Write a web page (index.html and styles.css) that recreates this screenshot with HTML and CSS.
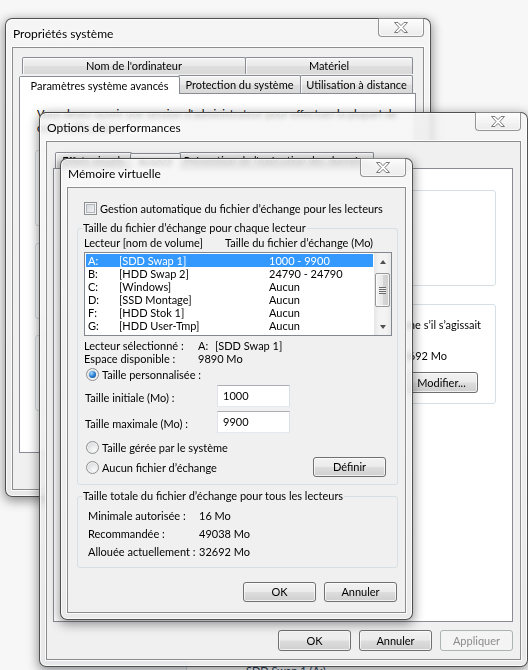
FILE: index.html
```html
<!DOCTYPE html>
<html lang="fr">
<head>
<meta charset="utf-8">
<title>Mémoire virtuelle</title>
<link rel="stylesheet" href="styles.css">
</head>
<body>

<div class="explorer">
  <div class="ex-side"></div>
  <div class="ex-main">SDD Swap 1 (A:)</div>
</div>

<section class="win win-sys">
  <div class="titlebar">
    <span class="title">Propriétés système</span>
    <span class="close"><svg width="14" height="11" viewBox="0 0 14 11"><path d="M0.5 0.5h3.5l3 3.2 3-3.2h3.5l-4.6 5 4.6 5h-3.5l-3-3.2-3 3.2h-3.5l4.6-5z" fill="#fff" stroke="#7a7a7a" stroke-width="1"/></svg></span>
  </div>
  <div class="client client-sys">
    <div class="tabrow row-back">
      <span class="tab t-nom">Nom de l'ordinateur</span>
      <span class="tab t-mat">Matériel</span>
    </div>
    <div class="tabrow row-front">
      <span class="tab sel t-avs">Paramètres système avancés</span>
      <span class="tab t-prot">Protection du système</span>
      <span class="tab t-dist">Utilisation à distance</span>
    </div>
    <div class="page page-sys">
      <p class="note">Vous devez ouvrir une session d'administrateur pour effectuer la plupart de ces modifications.</p>
      <div class="grp box sys-grp first"></div>
      <div class="grp box sys-grp second"></div>
      <div class="grp box sys-grp third"></div>
    </div>
  </div>
</section>

<section class="win win-perf">
  <div class="titlebar">
    <span class="title">Options de performances</span>
    <span class="close"><svg width="14" height="11" viewBox="0 0 14 11"><path d="M0.5 0.5h3.5l3 3.2 3-3.2h3.5l-4.6 5 4.6 5h-3.5l-3-3.2-3 3.2h-3.5l4.6-5z" fill="#fff" stroke="#7a7a7a" stroke-width="1"/></svg></span>
  </div>
  <div class="client client-perf">
    <div class="tabrow row-perf">
      <span class="tab t-eff">Effets visuels</span>
      <span class="tab sel t-adv">Avancé</span>
      <span class="tab t-dep">Prévention de l'exécution des données</span>
    </div>
    <div class="page page-perf">
      <div class="grp box perf-cpu"></div>
      <div class="grp box perf-vm">
        <p class="line-end"><span>Windows utilise comme s’il s’agissait</span></p>
        <div class="total"><span>32692 Mo</span></div>
        <div class="modif"><button class="btn btn-mod">Modifier...</button></div>
      </div>
    </div>
    <div class="actions">
      <button class="btn">OK</button>
      <button class="btn">Annuler</button>
      <button class="btn dis">Appliquer</button>
    </div>
  </div>
</section>

<section class="win win-vm">
  <div class="titlebar">
    <span class="title">Mémoire virtuelle</span>
    <span class="close"><svg width="14" height="11" viewBox="0 0 14 11"><path d="M0.5 0.5h3.5l3 3.2 3-3.2h3.5l-4.6 5 4.6 5h-3.5l-3-3.2-3 3.2h-3.5l4.6-5z" fill="#fff" stroke="#7a7a7a" stroke-width="1"/></svg></span>
  </div>
  <div class="client client-vm">
    <div class="check-row"><span class="checkbox"></span>Gestion automatique du fichier d’échange pour les lecteurs</div>

    <fieldset class="grp vm-drives">
      <legend>Taille du fichier d’échange pour chaque lecteur</legend>
      <div class="cols"><span>Lecteur [nom de volume]</span><span>Taille du fichier d’échange (Mo)</span></div>
      <div class="listbox">
        <ul class="rows">
          <li class="sel"><span>A:</span><span>[SDD Swap 1]</span><span>1000 - 9900</span></li>
          <li><span>B:</span><span>[HDD Swap 2]</span><span>24790 - 24790</span></li>
          <li><span>C:</span><span>[Windows]</span><span>Aucun</span></li>
          <li><span>D:</span><span>[SSD Montage]</span><span>Aucun</span></li>
          <li><span>F:</span><span>[HDD Stok 1]</span><span>Aucun</span></li>
          <li><span>G:</span><span>[HDD User-Tmp]</span><span>Aucun</span></li>
        </ul>
        <div class="vscroll">
          <span class="arrow"><span class="tri-up"></span></span>
          <div class="track"><span class="thumb"><span class="grip"></span></span></div>
          <span class="arrow"><span class="tri-down"></span></span>
        </div>
      </div>
      <div class="info">
        <span>Lecteur sélectionné :</span><span>A:</span><span>[SDD Swap 1]</span>
        <span>Espace disponible :</span><span class="span2">9890 Mo</span>
      </div>
      <div class="radio-row custom"><span class="radio on"></span>Taille personnalisée :</div>
      <div class="size-row first"><span class="size-label">Taille initiale (Mo) :</span><input class="field" type="text" value="1000"></div>
      <div class="size-row"><span class="size-label">Taille maximale (Mo) :</span><input class="field" type="text" value="9900"></div>
      <div class="radio-row sys"><span class="radio"></span>Taille gérée par le système</div>
      <div class="radio-row none"><span class="radio"></span>Aucun fichier d’échange<button class="btn btn-def">Définir</button></div>
    </fieldset>

    <fieldset class="grp vm-total">
      <legend>Taille totale du fichier d’échange pour tous les lecteurs</legend>
      <div class="totals">
        <span>Minimale autorisée :</span><span>16 Mo</span>
        <span>Recommandée :</span><span>49038 Mo</span>
        <span>Allouée actuellement :</span><span>32692 Mo</span>
      </div>
    </fieldset>

    <div class="actions vm-actions">
      <button class="btn">OK</button>
      <button class="btn">Annuler</button>
    </div>
  </div>
</section>

</body>
</html>
```
FILE: styles.css
```css
* { box-sizing: border-box; }
html, body { margin: 0; padding: 0; }
body {
  position: relative;
  width: 528px;
  height: 670px;
  overflow: hidden;
  background: #f7f7f7;
  font-family: Lato, "Segoe UI", "Noto Sans", sans-serif;
  font-size: 11px;
  line-height: 13px;
  color: #000;
}
p { margin: 0; }
button, input { font: inherit; color: inherit; margin: 0; }

/* window peeking at the very bottom, behind the dialogs */
.explorer {
  position: absolute;
  left: 40px;
  top: 657px;
  width: 488px;
  height: 30px;
  display: flex;
  background: #fff;
}
.ex-side { width: 147px; background: #f2f5f9; border-right: 1px solid #cfd6de; }
.ex-main { padding: 7px 0 0 59px; color: #1e3a5a; }

/* ---------- windows ---------- */
.win {
  position: absolute;
  display: flex;
  flex-direction: column;
  padding: 0 6px 6px;
  border: 1px solid rgba(40, 40, 40, 0.8);
  border-radius: 7px;
  background: linear-gradient(rgba(244, 244, 244, 0.72), rgba(226, 226, 226, 0.72));
  backdrop-filter: blur(2.5px);
  box-shadow: inset 0 0 0 1px rgba(255, 255, 255, 0.75), 0 3px 11px 1px rgba(0, 0, 0, 0.42);
}
.win-sys { left: 5px; top: 18px; width: 426px; height: 479px; }
.win-perf { left: 39px; top: 112px; width: 489px; height: 555px; }
.win-vm { left: 60px; top: 158px; width: 353px; height: 462px; }

.titlebar {
  flex: none;
  height: 28px;
  display: flex;
  align-items: flex-start;
}
.title {
  padding: 8px 0 0 1px;
  font-size: 12px;
  line-height: 14px;
  text-shadow: 0 0 6px #fff, 0 0 3px #fff;
}
.close {
  margin: -1px 0 0 auto;
  width: 46px;
  height: 19px;
  display: flex;
  align-items: center;
  justify-content: center;
  border: 1px solid rgba(50, 50, 50, 0.5);
  border-top-color: rgba(50, 50, 50, 0.25);
  border-radius: 0 0 4px 4px;
  background: linear-gradient(rgba(255, 255, 255, 0.7), rgba(228, 228, 228, 0.55));
  box-shadow: inset 0 0 0 1px rgba(255, 255, 255, 0.6);
}

.client {
  flex: 1;
  min-height: 0;
  display: flex;
  flex-direction: column;
  background: #f0f0f0;
  border: 1px solid #8d8d8d;
  box-shadow: 0 0 0 1px rgba(255, 255, 255, 0.8);
}
.client-sys { padding: 9px 7px 6px 6px; }
.client-perf { padding: 6px 7px 8px 6px; }
.client-vm { padding: 14px 7px 0 9px; }

/* ---------- tabs ---------- */
.tabrow { flex: none; display: flex; align-items: flex-end; }
.tab {
  flex: none;
  border: 1px solid #898c95;
  border-bottom: none;
  border-radius: 2px 2px 0 0;
  background: linear-gradient(#f3f3f3, #e9e9e9 50%, #dedede 51%, #d9d9d9);
  box-shadow: inset 1px 1px 0 rgba(255, 255, 255, 0.8);
  text-align: center;
  white-space: nowrap;
  overflow: hidden;
}
.tab.sel {
  position: relative;
  z-index: 1;
  height: 21px;
  background: #fff;
  box-shadow: none;
  line-height: 19px;
  margin-bottom: -1px;
}
.row-back .tab { height: 17px; line-height: 16px; }
.row-front { height: 20px; margin-top: -1px; }
.row-front .tab { height: 18px; line-height: 17px; }
.row-perf { height: 20px; }
.row-perf .tab { height: 16px; line-height: 15px; }

.t-nom { width: 224px; margin-left: 3px; }
.t-mat { width: 168px; margin-left: -1px; }
.t-avs { width: 161px; margin-right: -2px; }
.t-prot { width: 123px; }
.t-dist { width: 113px; margin-left: -1px; }
.t-eff { width: 77px; margin-left: 2px; }
.t-adv { width: 51px; margin-left: -2px; margin-right: -2px; }
.t-dep { width: 195px; }

.page {
  flex: 1;
  min-height: 0;
  display: flex;
  flex-direction: column;
  background: #fff;
  border: 1px solid #898c95;
}
.page-sys { padding: 13px 16px 0 15px; margin-bottom: 30px; }
.page-perf { padding: 21px 16px 0 8px; }

/* ---------- group boxes ---------- */
.grp {
  margin: 0;
  min-width: 0;
  border: 1px solid #d5dfe5;
  border-radius: 3px;
}
.grp legend { padding: 0 1px; line-height: 14px; }
.box { flex: none; }

.note { margin-left: 2px; line-height: 14px; }
.sys-grp { height: 76px; }
.sys-grp.first { margin-top: 15px; }
.sys-grp.second { margin-top: 17px; }
.sys-grp.third { margin-top: 16px; }

.perf-cpu { height: 96px; }
.perf-vm { height: 100px; margin-top: 18px; padding: 13px 14px 0 8px; }
.line-end {
  display: flex;
  justify-content: flex-end;
  white-space: nowrap;
  overflow: hidden;
}
.line-end span { flex: none; }
.total { display: flex; justify-content: flex-end; margin: 18px 34px 0 0; }
.modif { display: flex; justify-content: flex-end; margin: 10px 3px 0 0; }
.btn-mod { width: 65px; height: 20px; line-height: 18px; }

/* ---------- buttons & fields ---------- */
.btn {
  width: 73px;
  height: 21px;
  padding: 0;
  line-height: 19px;
  text-align: center;
  border: 1px solid #707070;
  border-radius: 3px;
  background: linear-gradient(#f2f2f2, #ebebeb 48%, #dddddd 52%, #cfcfcf);
  box-shadow: inset 0 0 0 1px rgba(255, 255, 255, 0.7);
}
.btn.dis {
  border-color: #adb2b5;
  background: #f4f4f4;
  color: #8b8b8b;
  box-shadow: none;
}
.actions { flex: none; display: flex; justify-content: flex-end; gap: 8px; }
.client-perf .actions { margin-top: 8px; }

.field {
  width: 73px;
  height: 22px;
  padding: 0 0 2px 5px;
  border: 1px solid;
  border-color: #abadb3 #dbdfe6 #e3e9ef #e2e3ea;
  background: #fff;
  outline: none;
}

.checkbox {
  flex: none;
  width: 13px;
  height: 13px;
  border: 1px solid #8e8f8f;
  background: linear-gradient(135deg, #cdd1d6, #f7f7f7);
  box-shadow: inset 0 0 0 1px #f4f4f4, inset 0 0 0 2px #b2b7bd;
}
.radio {
  flex: none;
  width: 13px;
  height: 13px;
  display: flex;
  align-items: center;
  justify-content: center;
  border-radius: 50%;
  border: 1px solid #8e8f8f;
  background: radial-gradient(circle at 65% 70%, #fafafa, #d4d6d9 85%);
  box-shadow: inset 0 0 0 1px #f3f3f3;
}
.radio.on::after {
  content: "";
  width: 7px;
  height: 7px;
  border-radius: 50%;
  background: radial-gradient(circle at 35% 30%, #a9dcff, #2a7fd3 50%, #0c3f80);
}

/* ---------- virtual memory dialog ---------- */
.check-row {
  display: flex;
  align-items: center;
  gap: 3px;
  height: 13px;
  margin-left: 7px;
}
.vm-drives { margin-top: 6px; padding: 1px 5px 7px 6px; }
.vm-drives legend { margin-left: -2px; }
.cols {
  display: grid;
  grid-template-columns: 141px auto;
  line-height: 14px;
}
.listbox {
  margin-top: 2px;
  height: 84px;
  display: flex;
  border: 1px solid #828790;
  background: #fff;
}
.rows {
  flex: 1;
  list-style: none;
  margin: 0;
  padding: 1px 1px 0;
}
.rows li {
  display: grid;
  grid-template-columns: 31px 150px auto;
  height: 13px;
  line-height: 13px;
  padding-left: 2px;
  white-space: nowrap;
}
.rows li.sel { background: #3399ff; color: #fff; }

.vscroll {
  width: 17px;
  display: flex;
  flex-direction: column;
  background: linear-gradient(90deg, #e6e6e6, #f3f3f3 30%, #f3f3f3 70%, #e9e9e9);
}
.arrow {
  flex: none;
  height: 17px;
  display: flex;
  align-items: center;
  justify-content: center;
}
.tri-up, .tri-down {
  width: 0;
  height: 0;
  border-left: 3.5px solid transparent;
  border-right: 3.5px solid transparent;
}
.tri-up { border-bottom: 4px solid #505050; }
.tri-down { border-top: 4px solid #505050; }
.track { flex: 1; padding: 3px 1px 0; }
.thumb {
  height: 34px;
  display: flex;
  align-items: center;
  justify-content: center;
  border: 1px solid #979797;
  border-radius: 2px;
  background: linear-gradient(90deg, #f4f4f4, #e8e8e8 50%, #d6d6d6 51%, #cfcfcf);
  box-shadow: inset 0 0 0 1px rgba(255, 255, 255, 0.75);
}
.grip {
  width: 7px;
  height: 7px;
  background: repeating-linear-gradient(#6a6a6a 0 1px, #f0f0f0 1px 2px);
}

.info {
  display: grid;
  grid-template-columns: 114px 17px auto;
  margin-top: 3px;
  line-height: 13px;
}
.info .span2 { grid-column: 2 / span 2; }

.radio-row {
  display: flex;
  align-items: center;
  gap: 3px;
  margin-left: 2px;
  height: 13px;
}
.radio-row.custom { margin-top: 3px; }
.radio-row.sys { margin-top: 8px; }
.radio-row.none { margin-top: 3px; height: 20px; }
.btn-def { margin-left: auto; margin-right: 6px; height: 20px; line-height: 18px; }

.size-row {
  display: flex;
  align-items: center;
  height: 22px;
  margin-top: 4px;
}
.size-label { width: 132px; margin-left: 1px; padding-top: 3px; }

.vm-total { margin-top: 4px; padding: 4px 5px 6px 10px; }
.vm-total legend { margin-left: -6px; }
.totals {
  display: grid;
  grid-template-columns: 111px auto;
  line-height: 18px;
}

.vm-actions { margin-top: 14px; margin-right: 1px; }
.vm-actions .btn { height: 20px; line-height: 18px; }
```
